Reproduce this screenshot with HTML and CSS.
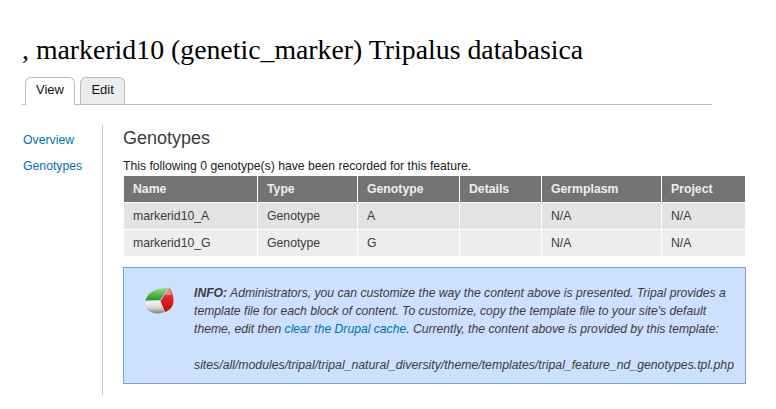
FILE: index.html
```html
<!DOCTYPE html>
<html lang="en">
<head>
<meta charset="utf-8">
<title>markerid10</title>
<link rel="stylesheet" href="styles.css">
</head>
<body>
<div class="page">
  <h1 class="title">, markerid10 (genetic_marker) Tripalus databasica</h1>
  <ul class="tabs">
    <li class="tab active"><a href="#">View</a></li>
    <li class="tab"><a href="#">Edit</a></li>
  </ul>
  <div class="layout">
    <nav class="side">
      <a href="#">Overview</a>
      <a href="#">Genotypes</a>
    </nav>
    <main class="content">
      <h2 class="heading">Genotypes</h2>
      <p class="lead">This following 0 genotype(s) have been recorded for this feature.</p>
      <table class="grid">
        <colgroup>
          <col class="c1"><col class="c2"><col class="c3"><col class="c4"><col class="c5"><col class="c6">
        </colgroup>
        <thead>
          <tr><th>Name</th><th>Type</th><th>Genotype</th><th>Details</th><th>Germplasm</th><th>Project</th></tr>
        </thead>
        <tbody>
          <tr class="odd"><td>markerid10_A</td><td>Genotype</td><td>A</td><td></td><td>N/A</td><td>N/A</td></tr>
          <tr class="even"><td>markerid10_G</td><td>Genotype</td><td>G</td><td></td><td>N/A</td><td>N/A</td></tr>
        </tbody>
      </table>
      <div class="info">
        <svg class="info-icon" viewBox="0 0 29 27" width="29" height="27" aria-hidden="true">
          <defs>
            <linearGradient id="g" x1="0" y1="0" x2="0" y2="1"><stop offset="0" stop-color="#a4dc8e"/><stop offset=".6" stop-color="#4cb33f"/><stop offset="1" stop-color="#2f8f2a"/></linearGradient>
            <linearGradient id="r" x1="0" y1="0" x2="0" y2="1"><stop offset="0" stop-color="#e85a5a"/><stop offset=".5" stop-color="#e01f1f"/><stop offset="1" stop-color="#b01414"/></linearGradient>
            <linearGradient id="s" x1="0" y1="0" x2="0" y2="1"><stop offset="0" stop-color="#f4f4f2"/><stop offset=".5" stop-color="#d8d8d4"/><stop offset="1" stop-color="#7f7f7a"/></linearGradient>
          </defs>
          <path d="M0.500 13.500 C2 6 10 1 24 0.500 L15 13 Z" fill="url(#g)"/>
          <path d="M24.500 0.500 L15.500 14 L20 25 C25 23.500 28.500 19 28.500 14 C28.500 9 27 4 24.500 0.500 Z" fill="url(#r)"/>
          <path d="M0.500 14.500 L15 14.500 L19.500 25 C15 27 9 27 5 24.500 C2 22.500 0 18.500 0.500 14.500 Z" fill="url(#s)"/>
          <path d="M24.500 0.500 L19.500 8 L26.500 8 Z" fill="#f4a6a6" opacity=".7"/>
        </svg>
        <div class="info-text">
          <p class="note"><strong>INFO:</strong> Administrators, you can customize the way the content above is presented. Tripal provides a template file for each block of content. To customize, copy the template file to your site's default theme, edit then <a href="#">clear the Drupal cache</a>. Currently, the content above is provided by this template:</p>
          <p class="path">sites/all/modules/tripal/tripal_natural_diversity/theme/templates/tripal_feature_nd_genotypes.tpl.php</p>
        </div>
      </div>
    </main>
  </div>
</div>
</body>
</html>
```
FILE: styles.css
```css
html, body {
  margin: 0;
  padding: 0;
  background: #fff;
}
body {
  font-family: "Liberation Sans", Arial, sans-serif;
  font-size: 12.25px;
  line-height: 18px;
  color: #3b3b3b;
}
a {
  color: #0071b3;
  text-decoration: none;
}
.page {
  padding: 33px 0 0 22px;
  width: 725px;
}
.title {
  margin: 0 0 10px;
  font-family: "Liberation Serif", "Times New Roman", serif;
  font-weight: normal;
  font-size: 27.8px;
  line-height: 34px;
  color: #000;
}
.tabs {
  display: flex;
  gap: 5px;
  margin: 0;
  padding: 0 0 0 3px;
  width: 687px;
  height: 27px;
  list-style: none;
  border-bottom: 1px solid #bbb;
}
.tab {
  height: 26px;
  border: 1px solid #bbb;
  border-bottom: 0;
  border-radius: 6px 6px 0 0;
  background: #ededed;
  font-size: 13px;
  line-height: 24px;
}
.tab a {
  display: block;
  padding: 0 10.500px 0 10px;
  color: #111;
}
.tab.active {
  height: 27px;
  background: #fff;
  margin-bottom: -1px;
}
.layout {
  display: flex;
  margin-top: 20px;
}
.side {
  display: flex;
  flex-direction: column;
  flex: none;
  gap: 8px;
  width: 80px;
  height: 270px;
  margin-left: 1px;
  padding-top: 6px;
  box-sizing: border-box;
  border-right: 1px solid #ccc;
}
.content {
  flex: none;
  margin-left: 20px;
  width: 623px;
}
.heading {
  margin: 2px 0 0;
  font-weight: normal;
  font-size: 18px;
  line-height: 22px;
  color: #3b3b3b;
}
.lead {
  margin: 8px 0 0;
  color: #222;
  font-size: 12.2px;
}
.grid {
  margin: 1px 0 0 1px;
  width: 621px;
  border-collapse: collapse;
  table-layout: fixed;
}
.c1 { width: 133px; }
.c2 { width: 100px; }
.c3 { width: 102px; }
.c4 { width: 82px; }
.c5 { width: 120px; }
.c6 { width: 84px; }
.grid th, .grid td {
  height: 26px;
  padding: 0 0 0 9.500px;
  border-left: 1px solid #fff;
  border-bottom: 1px solid #fff;
  text-align: left;
}
.grid th:first-child, .grid td:first-child {
  padding-left: 9px;
  border-left: 0;
}
.grid th {
  background: #737373;
  color: #eee;
  font-weight: bold;
}
.odd td { background: #e3e3e3; }
.even td { background: #ededed; }
.info {
  display: flex;
  margin-top: 10px;
  width: 621px;
  height: 115px;
  border: 1px solid #7f9fd0;
  background: #cce0ff;
}
.info-icon {
  flex: none;
  margin: 19px 0 0 21px;
}
.info-text {
  margin-left: 20px;
  padding-top: 16px;
  width: 536px;
  font-style: italic;
}
.info-text p {
  margin: 0;
}
.info-text .note {
  font-size: 12.17px;
}
.info-text .path {
  margin-top: 18px;
  font-size: 12.27px;
  white-space: nowrap;
}
```
